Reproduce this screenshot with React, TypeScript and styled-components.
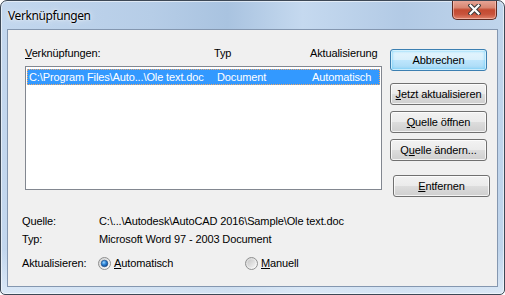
import React from 'react';
import styled, { createGlobalStyle, css } from 'styled-components';

type LinkType = {
  path: string;
  kind: string;
  update: string;
};

const LINKS: LinkType[] = [
  {
    path: 'C:\\Program Files\\Auto...\\Ole text.doc',
    kind: 'Document',
    update: 'Automatisch',
  },
];

const GlobalStyle = createGlobalStyle`
  html, body {
    margin: 0;
    padding: 0;
    background: #ffffff;
  }
  body {
    font-family: 'Liberation Sans', Arial, sans-serif;
    font-size: 11px;
    letter-spacing: -0.12px;
    color: #000000;
  }
`;

const CloseIcon = () => (
  <svg width="13" height="11" viewBox="0 0 13 11">
    <path d="M2.5 1.5 L10.5 9.5 M10.5 1.5 L2.5 9.5" stroke="#3b3b3b" strokeWidth="4.2" strokeLinecap="square" />
    <path d="M2.5 1.5 L10.5 9.5 M10.5 1.5 L2.5 9.5" stroke="#ffffff" strokeWidth="2.2" strokeLinecap="square" />
  </svg>
);

const RadioIcon = ({ checked }: { checked?: boolean }) => (
  <svg width="13" height="13" viewBox="0 0 13 13">
    <defs>
      <linearGradient id="radioOuter" x1="0" y1="0" x2="1" y2="1">
        <stop offset="0" stopColor="#d2d2d2" />
        <stop offset="1" stopColor="#ffffff" />
      </linearGradient>
      <linearGradient id="radioInner" x1="0" y1="0" x2="1" y2="1">
        <stop offset="0" stopColor="#c6c6c6" />
        <stop offset="1" stopColor="#f4f4f4" />
      </linearGradient>
      <radialGradient id="radioDot" cx="0.4" cy="0.35" r="0.7">
        <stop offset="0" stopColor="#9fd6ff" />
        <stop offset="0.45" stopColor="#2f87d8" />
        <stop offset="1" stopColor="#0c3f87" />
      </radialGradient>
    </defs>
    <circle cx="6.5" cy="6.5" r="6" fill="url(#radioOuter)" stroke="#8e8f8f" strokeWidth="1" />
    <circle cx="6.5" cy="6.5" r="4" fill="url(#radioInner)" />
    {checked && <circle cx="6.5" cy="6.5" r="3.3" fill="url(#radioDot)" stroke="#1b4c86" strokeWidth="0.6" />}
  </svg>
);

const App = () => {
  return (
    <>
      <GlobalStyle />
      <Window>
        <TitleBar>
          <Title>Verknüpfungen</Title>
          <CloseButton>
            <CloseIcon />
          </CloseButton>
        </TitleBar>
        <Client>
          <TopRow>
            <ListColumn>
              <ListHeader>
                <span>
                  <u>V</u>erknüpfungen:
                </span>
                <span>Typ</span>
                <span>Aktualisierung</span>
              </ListHeader>
              <ListBox>
                {LINKS.map(({ path, kind, update }) => (
                  <ListRow key={path} $selected>
                    <span>{path}</span>
                    <span>{kind}</span>
                    <span>{update}</span>
                  </ListRow>
                ))}
              </ListBox>
            </ListColumn>
            <ButtonColumn>
              <Button $default>Abbrechen</Button>
              <Button $extraTop={6}>
                <u>J</u>etzt aktualisieren
              </Button>
              <Button>
                <u>Q</u>uelle öffnen
              </Button>
              <Button>
                Q<u>u</u>elle ändern...
              </Button>
              <Button $extraTop={8} $shift={3}>
                <u>E</u>ntfernen
              </Button>
            </ButtonColumn>
          </TopRow>
          <InfoGrid>
            <InfoLabel>Quelle:</InfoLabel>
            <InfoValue>C:\...\Autodesk\AutoCAD 2016\Sample\Ole text.doc</InfoValue>
            <InfoLabel>Typ:</InfoLabel>
            <InfoValue>Microsoft Word 97 - 2003 Document</InfoValue>
            <InfoLabel>Aktualisieren:</InfoLabel>
            <RadioGroup>
              <RadioOption $width={147}>
                <RadioIcon checked />
                <span>
                  <u>A</u>utomatisch
                </span>
              </RadioOption>
              <RadioOption>
                <RadioIcon />
                <span>
                  <u>M</u>anuell
                </span>
              </RadioOption>
            </RadioGroup>
          </InfoGrid>
        </Client>
      </Window>
    </>
  );
};

export default App;

const Window = styled.div`
  box-sizing: border-box;
  width: 505px;
  height: 295px;
  display: flex;
  flex-direction: column;
  padding: 0 6px 7px;
  border: 1px solid #3d4856;
  border-radius: 7px 7px 5px 5px;
  background:
    linear-gradient(180deg, rgba(255, 255, 255, 0) 85%, rgba(230, 240, 250, 0.7) 100%),
    linear-gradient(90deg, #c3d7ee 0%, #b6cde7 30%, #a9c3e0 45%, #c5d9ef 60%, #b2cae5 80%, #c0d5ec 100%);
  box-shadow: inset 0 0 0 1px rgba(255, 255, 255, 0.55);
  overflow: hidden;
`;

const TitleBar = styled.div`
  height: 28px;
  display: flex;
  justify-content: space-between;
  align-items: flex-start;
  padding-left: 1px;
`;

const Title = styled.div`
  align-self: center;
  margin-top: 1px;
  font-family: 'Noto Sans', 'Open Sans', sans-serif;
  font-size: 12px;
  letter-spacing: -0.4px;
  line-height: 16px;
  color: #000000;
  text-shadow: 0 0 6px rgba(255, 255, 255, 0.9), 0 0 2px rgba(255, 255, 255, 0.9);
`;

const CloseButton = styled.div`
  box-sizing: border-box;
  width: 45px;
  height: 20px;
  margin-top: -1px;
  margin-right: 1px;
  display: flex;
  align-items: center;
  justify-content: center;
  border: 1px solid #5c2a22;
  border-top: none;
  border-radius: 0 0 5px 5px;
  background: linear-gradient(180deg, #e9a99b 0%, #d88672 40%, #c44a31 52%, #c8533c 75%, #e0836c 100%);
  box-shadow: inset 0 0 0 1px rgba(255, 210, 200, 0.55);
`;

const Client = styled.div`
  flex: 1;
  display: flex;
  flex-direction: column;
  padding: 17px 10px 0 14px;
  border: 1px solid #8497b0;
  background: #f0f0f0;
`;

const TopRow = styled.div`
  display: flex;
  gap: 8px;
  margin-left: 3px;
`;

const ListColumn = styled.div`
  width: 357px;
  display: flex;
  flex-direction: column;
`;

const ListHeader = styled.div`
  display: grid;
  grid-template-columns: 189px 96px 1fr;
  line-height: 13px;
  white-space: nowrap;
`;

const ListBox = styled.div`
  box-sizing: border-box;
  height: 124px;
  margin-top: 6px;
  padding: 2px 1px;
  border: 1px solid #828790;
  background: #ffffff;
`;

const ListRow = styled.div<{ $selected?: boolean }>`
  box-sizing: border-box;
  height: 16px;
  display: grid;
  grid-template-columns: 188px 95px 1fr;
  align-items: center;
  padding-left: 2px;
  line-height: 13px;
  white-space: nowrap;
  ${({ $selected }) =>
    $selected &&
    css`
      background: #3399ff;
      color: #ffffff;
      outline: 1px dotted #f0a868;
      outline-offset: -1px;
    `}
`;

const ButtonColumn = styled.div`
  width: 97px;
  display: flex;
  flex-direction: column;
  gap: 6px;
  padding-top: 2px;
`;

const Button = styled.div<{ $default?: boolean; $extraTop?: number; $shift?: number }>`
  box-sizing: border-box;
  height: 22px;
  width: 97px;
  margin-top: ${({ $extraTop }) => $extraTop ?? 0}px;
  margin-left: ${({ $shift }) => $shift ?? 0}px;
  display: flex;
  align-items: center;
  justify-content: center;
  border: 1px solid #707070;
  border-radius: 3px;
  line-height: 13px;
  white-space: nowrap;
  background: linear-gradient(180deg, #f2f2f2 0%, #ebebeb 48%, #dddddd 50%, #cfcfcf 100%);
  box-shadow: inset 0 0 0 1px rgba(255, 255, 255, 0.75);
  ${({ $default }) =>
    $default &&
    css`
      border-color: #3c7fb1;
      background: linear-gradient(180deg, #e6f5fd 0%, #d9f0fc 48%, #bee6fd 50%, #a7d9f5 100%);
      box-shadow: inset 0 0 0 1px rgba(255, 255, 255, 0.6), inset 0 0 3px 1px rgba(80, 200, 250, 0.8);
    `}
`;

const InfoGrid = styled.div`
  margin-top: 18px;
  display: grid;
  grid-template-columns: 77px 1fr;
  grid-template-rows: 18px 24px 13px;
  align-items: start;
  line-height: 13px;
  white-space: nowrap;
`;

const InfoLabel = styled.div``;

const InfoValue = styled.div``;

const RadioGroup = styled.div`
  display: flex;
  align-items: center;
  height: 13px;
  margin-left: -1px;
`;

const RadioOption = styled.div<{ $width?: number }>`
  display: flex;
  align-items: center;
  gap: 3px;
  width: ${({ $width }) => ($width ? `${$width}px` : 'auto')};

  svg {
    flex-shrink: 0;
  }
`;
